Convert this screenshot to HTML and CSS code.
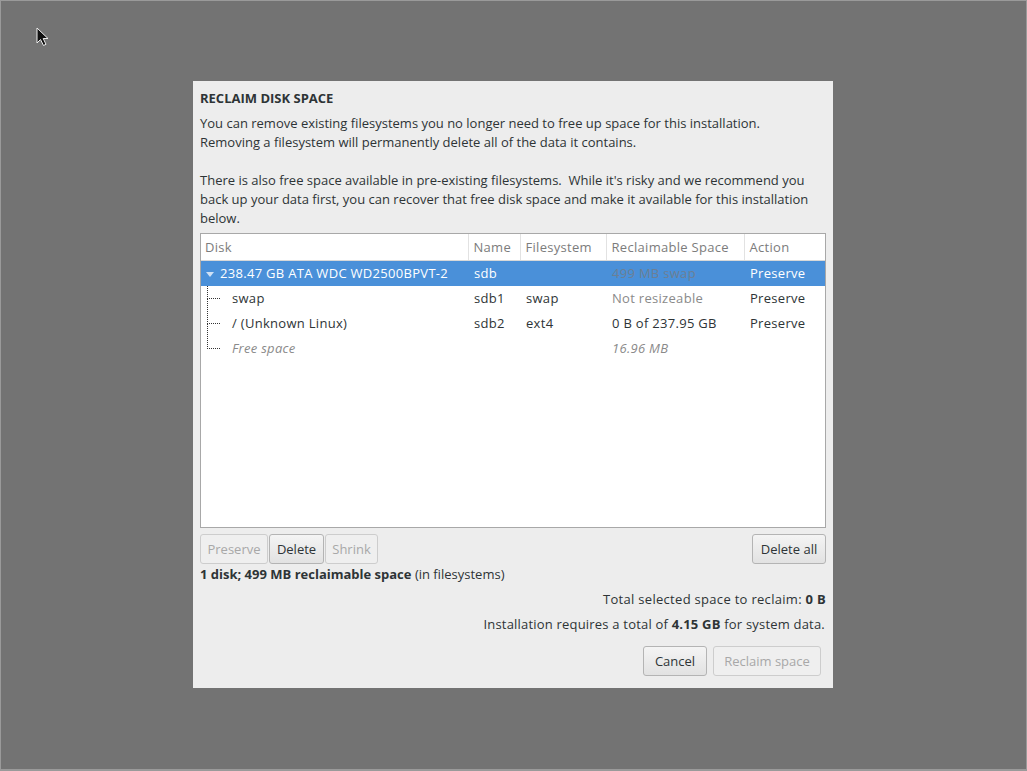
FILE: index.html
```html
<!DOCTYPE html>
<html lang="en">
<head>
    <meta charset="UTF-8">
    <title>Reclaim Disk Space</title>
    <link rel="stylesheet" href="styles.css">
</head>
<body>
    <div class="screen">
        <svg class="pointer" width="14" height="20" viewBox="0 0 14 20">
            <path d="M1 1 L1 16 L4.5 12.5 L7.5 18.5 L10 17.3 L7.2 11.5 L12 11.5 Z" fill="#111" stroke="#eee" stroke-width="1"/>
        </svg>
        <div class="dialog">
            <h1>RECLAIM DISK SPACE</h1>
            <p>You can remove existing filesystems you no longer need to free up space for this installation.<br>
            Removing a filesystem will permanently delete all of the data it contains.</p>
            <p>There is also free space available in pre-existing filesystems.&nbsp; While it's risky and we recommend you back up your data first, you can recover that free disk space and make it available for this installation below.</p>

            <div class="table-box">
                <table class="disks">
                    <colgroup>
                        <col class="c-disk">
                        <col class="c-name">
                        <col class="c-fs">
                        <col class="c-space">
                        <col class="c-action">
                    </colgroup>
                    <thead>
                        <tr>
                            <th>Disk</th>
                            <th>Name</th>
                            <th>Filesystem</th>
                            <th>Reclaimable Space</th>
                            <th>Action</th>
                        </tr>
                    </thead>
                    <tbody>
                        <tr class="selected">
                            <td><span class="expander"></span>238.47 GB ATA WDC WD2500BPVT-2</td>
                            <td>sdb</td>
                            <td></td>
                            <td class="faded">499 MB swap</td>
                            <td>Preserve</td>
                        </tr>
                        <tr>
                            <td class="child"><span class="branch"></span>swap</td>
                            <td>sdb1</td>
                            <td>swap</td>
                            <td class="muted">Not resizeable</td>
                            <td>Preserve</td>
                        </tr>
                        <tr>
                            <td class="child"><span class="branch"></span>/ (Unknown Linux)</td>
                            <td>sdb2</td>
                            <td>ext4</td>
                            <td>0 B of 237.95 GB</td>
                            <td>Preserve</td>
                        </tr>
                        <tr>
                            <td class="child last"><span class="branch"></span><em>Free space</em></td>
                            <td></td>
                            <td></td>
                            <td><em>16.96 MB</em></td>
                            <td></td>
                        </tr>
                    </tbody>
                </table>
            </div>

            <div class="actions">
                <div class="group">
                    <button disabled>Preserve</button>
                    <button>Delete</button>
                    <button disabled>Shrink</button>
                </div>
                <button>Delete all</button>
            </div>

            <div class="summary"><b>1 disk; 499 MB reclaimable space</b> (in filesystems)</div>
            <div class="total">Total selected space to reclaim: <b>0 B</b></div>
            <div class="total wide">Installation requires a total of <b>4.15 GB</b> for system data.</div>

            <div class="footer">
                <button>Cancel</button>
                <button disabled>Reclaim space</button>
            </div>
        </div>
    </div>
</body>
</html>
```

FILE: styles.css
```css
html, body {
    margin: 0;
    padding: 0;
    height: 100%;
}
body {
    background-color: #737373;
    font-family: "Open Sans", "DejaVu Sans", sans-serif;
    font-size: 13px;
    color: #2e3436;
}
.screen {
    position: relative;
    box-sizing: border-box;
    height: 771px;
    border: 1px solid #9a9a9a;
    border-bottom-width: 2px;
    display: flex;
    align-items: center;
    justify-content: center;
}
.pointer {
    position: absolute;
    left: 35px;
    top: 26px;
}
.dialog {
    box-sizing: border-box;
    width: 640px;
    height: 607px;
    margin: -1px 1px 0 0;
    background: #ededed;
    padding: 8px 7px 13px 7px;
    line-height: 19px;
}
h1 {
    margin: 0;
    font-size: 13px;
    font-weight: bold;
    line-height: 19px;
}
p {
    margin: 0 0 19px 0;
}
.dialog h1 + p {
    margin-top: 6px;
}
.table-box {
    box-sizing: border-box;
    height: 295px;
    margin-top: -14px;
    background: white;
    border: 1px solid #a8a8a8;
}
.disks {
    width: 100%;
    border-collapse: collapse;
    table-layout: fixed;
    letter-spacing: 0.3px;
}
.c-disk { width: 267px; }
.c-name { width: 52px; }
.c-fs { width: 86px; }
.c-space { width: 138px; }
.c-action { width: auto; }
.disks th {
    height: 26px;
    padding: 0 0 0 5px;
    text-align: left;
    font-weight: normal;
    color: #7c7c7c;
    border-bottom: 1px solid #d8d8d8;
    border-left: 1px solid #e2e2e2;
    white-space: nowrap;
}
.disks th:first-child {
    border-left: none;
    padding-left: 4px;
}
.disks td {
    height: 25px;
    padding: 0 0 0 6px;
    white-space: nowrap;
    overflow: hidden;
}
.disks td:first-child {
    padding-left: 5px;
}
.disks em {
    color: #8a8a8a;
}
.muted {
    color: #8a8a8a;
}
.selected td {
    background: #4a90d9;
    color: white;
}
.selected td.faded {
    color: #6c7f94;
}
.expander {
    display: inline-block;
    width: 0;
    height: 0;
    border-left: 4px solid transparent;
    border-right: 4px solid transparent;
    border-top: 5px solid #cfe1f5;
    margin: 0 6px 1px 0;
}
.disks td.child {
    position: relative;
    padding-left: 31px;
}
.branch {
    position: absolute;
    left: 6px;
    top: -1px;
    width: 12px;
    height: 13px;
    border-left: 1px dotted #333;
    border-bottom: 1px dotted #333;
}
.child:not(.last)::after {
    content: "";
    position: absolute;
    left: 6px;
    top: 13px;
    height: 13px;
    border-left: 1px dotted #333;
}
.actions {
    display: flex;
    justify-content: space-between;
    margin-top: 6px;
}
.group {
    display: flex;
    gap: 1px;
}
button {
    font-family: inherit;
    font-size: 13px;
    height: 30px;
    padding: 0 4px;
    white-space: nowrap;
    color: #2e3436;
    background: linear-gradient(#f4f4f4, #e2e2e2);
    border: 1px solid #b4b4b4;
    border-radius: 3px;
}
button:disabled {
    color: #a8a8a8;
    background: #efefef;
    border-color: #cdcdcd;
}
.group button:first-child {
    width: 68px;
}
.group button:nth-child(2) {
    width: 55px;
}
.group button:nth-child(3) {
    width: 53px;
}
.actions > button {
    width: 74px;
}
.summary {
    margin-top: 1px;
}
.total {
    text-align: right;
    margin-top: 6px;
    letter-spacing: 0.3px;
}
.wide {
    letter-spacing: 0.2px;
    padding-right: 1px;
}
.footer {
    display: flex;
    justify-content: flex-end;
    gap: 6px;
    margin: 12px 5px 0 0;
}
.footer button:first-child {
    width: 64px;
}
.footer button:last-child {
    width: 108px;
}
```
